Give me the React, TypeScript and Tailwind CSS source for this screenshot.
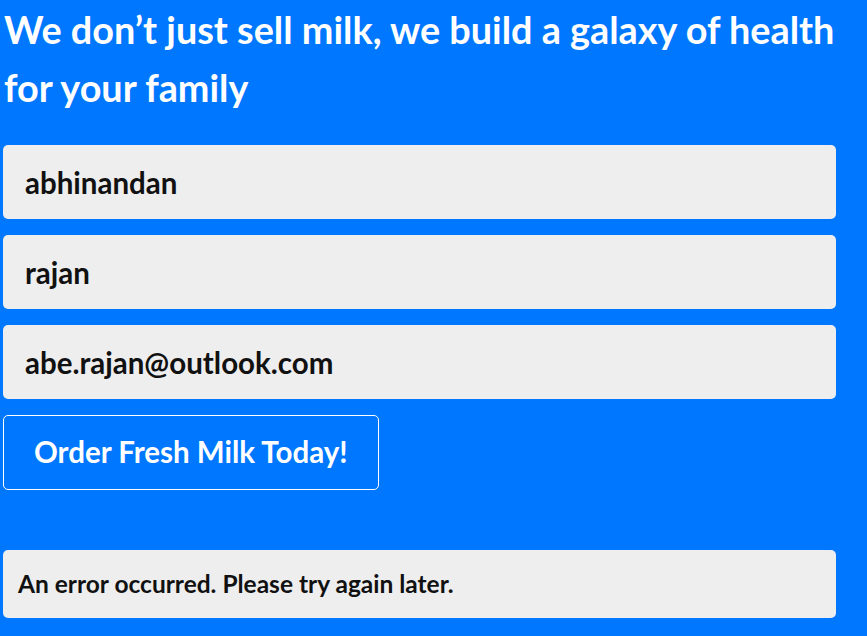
import React from 'react';

const fields = ['abhinandan', 'rajan', 'abe.rajan@outlook.com'];

export default function App() {
    return (
        <div className="min-h-[636px] bg-[#0077ff] px-[3px] font-['Lato','Liberation_Sans',sans-serif]">
            <h1 className="pt-[1px] pl-[1px] text-[37.8px] font-bold leading-[58px] text-white">
                We don’t just sell milk, we build a galaxy of health for your family
            </h1>
            <div className="w-[833px]">
                <form className="mt-[28px] flex flex-col gap-4" onSubmit={(e) => e.preventDefault()}>
                    {fields.map((value) => (
                        <input
                            key={value}
                            defaultValue={value}
                            className="h-[74px] w-full rounded-[5px] bg-[#eeeeee] px-[22px] text-[29.5px] font-bold text-[#111111] outline-none"
                        />
                    ))}
                    <div>
                        <button
                            type="submit"
                            className="h-[75px] rounded-[5px] border border-white px-[30px] text-[29.5px] font-bold text-white"
                        >
                            Order Fresh Milk Today!
                        </button>
                    </div>
                </form>
                <div className="mt-[60px] flex h-[68px] items-center rounded-[5px] bg-[#eeeeee] px-[15px] text-[24.5px] font-bold text-[#111111]">
                    An error occurred. Please try again later.
                </div>
            </div>
        </div>
    );
}
